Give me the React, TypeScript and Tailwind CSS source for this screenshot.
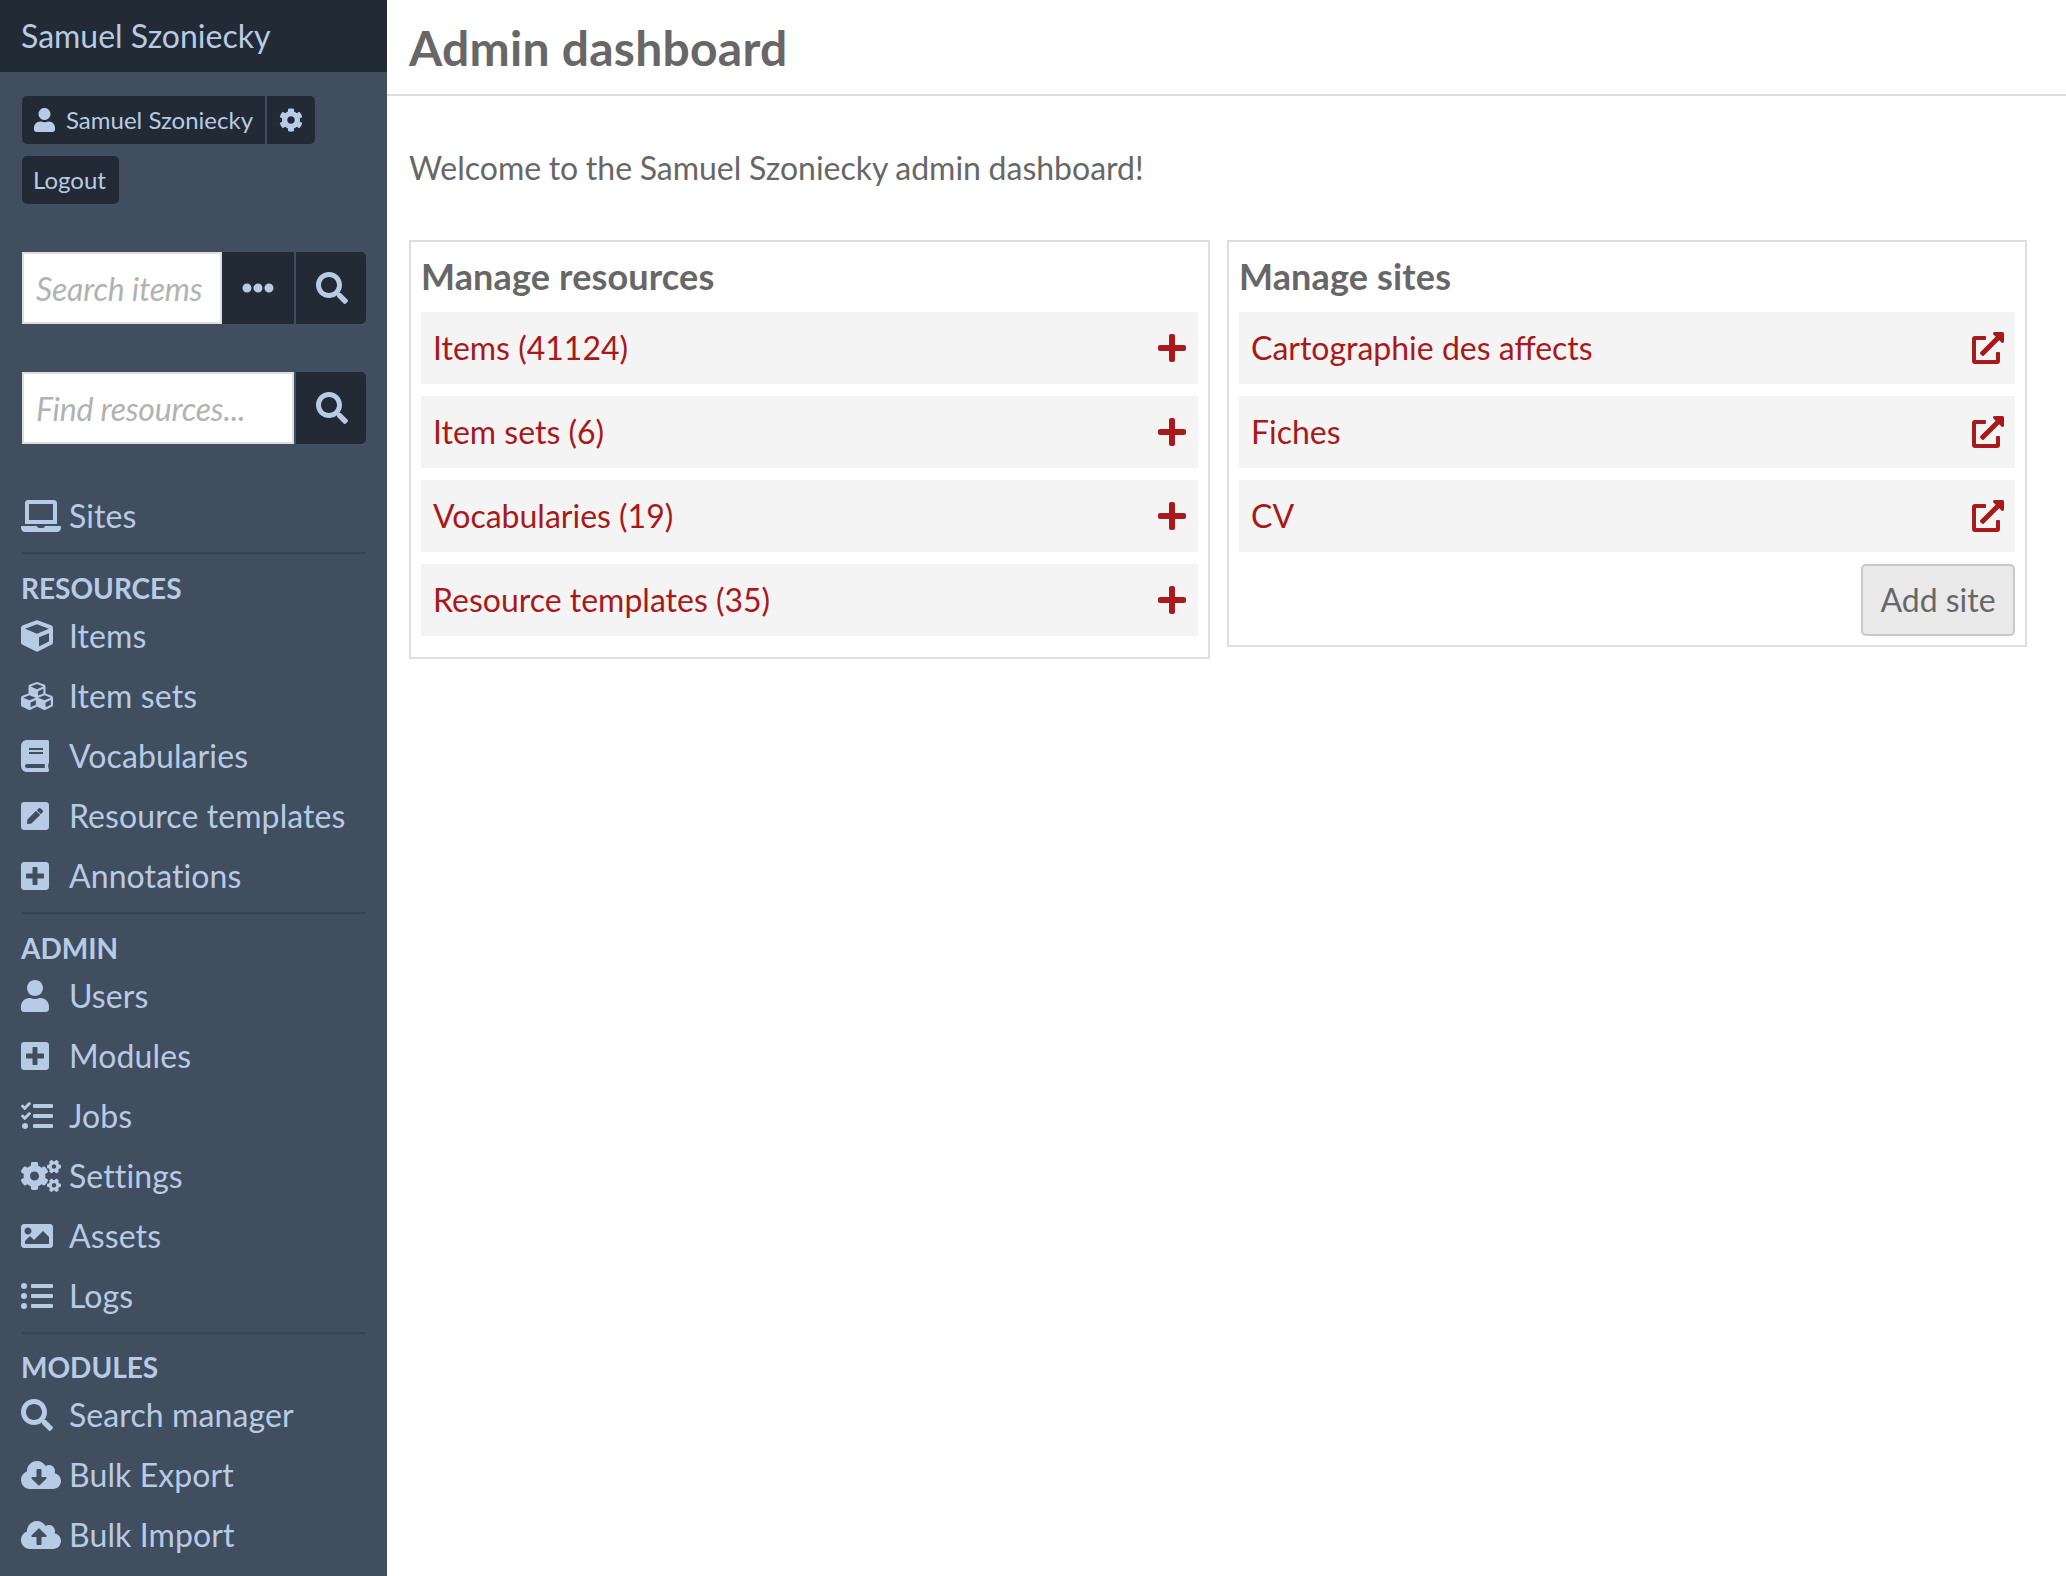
import React from "react";
import {
  FaUser, FaCog, FaEllipsisH, FaSearch, FaLaptop, FaCube, FaCubes, FaBook, FaPenSquare,
  FaPlusSquare, FaTasks, FaCogs, FaImage, FaListUl, FaCloudDownloadAlt, FaCloudUploadAlt,
  FaPlus, FaExternalLinkAlt,
} from "react-icons/fa";

type Item = { label: string; icon: React.ComponentType<{ className?: string }>; w: string };

function NavRow({ label, icon: Icon, w }: Item) {
  return (
    <a className="-ml-[1px] flex h-[60px] items-center tracking-[0.1px]">
      <span className="w-[48px] shrink-0">
        <Icon className={`block h-[32px] ${w}`} />
      </span>
      <span>{label}</span>
    </a>
  );
}

function Section({ title, items, labelH }: { title: string; items: Item[]; labelH: string }) {
  return (
    <div>
      <div className="mt-[6px] border-t-[2px] border-[#37434f]" />
      <div className={`-ml-[1px] flex ${labelH} items-end text-[28px] leading-[36px] font-bold uppercase`}>{title}</div>
      {items.map((i) => (
        <NavRow key={i.label} {...i} />
      ))}
    </div>
  );
}

function Panel({ title, rows, icon: Icon, iconW, width, rowPr, children }: { title: string; rows: string[]; icon: React.ComponentType<{ className?: string }>; iconW: string; width: string; rowPr: string; children?: React.ReactNode }) {
  return (
    <section className={`${width} border-[2px] border-[#dedede] px-[10px] pb-[9px]`}>
      <h2 className="flex h-[70px] items-center pb-[2px] text-[36px] font-bold tracking-[0.15px] text-[#676767]">{title}</h2>
      {rows.map((r) => (
        <div key={r} className={`mb-[12px] flex h-[72px] items-center justify-between bg-[#f4f4f4] ${rowPr} pl-[12px] text-[#a91919]`}>
          <span>{r}</span>
          <Icon className={`block h-[32px] ${iconW}`} />
        </div>
      ))}
      {children}
    </section>
  );
}

export default function App() {
  return (
    <div className="flex h-[1576px] overflow-hidden bg-white text-[32px] leading-[48px] font-['Lato',sans-serif]">
      <aside className="w-[387px] shrink-0 bg-[#414e60] text-[#b8cbe5]">
        <div className="flex h-[72px] items-center bg-[#212a35] pl-[21px]">Samuel Szoniecky</div>
        <div className="pr-[21px] pl-[22px]">
          <div className="mt-[24px] flex gap-[2px] text-[24px] leading-[48px]">
            <div className="flex h-[48px] w-[243px] items-center gap-[11px] rounded-l-[5px] bg-[#212a35] pl-[12px]">
              <FaUser className="h-[24px] w-[21px]" />
              <span>Samuel Szoniecky</span>
            </div>
            <div className="flex h-[48px] w-[48px] items-center justify-center rounded-r-[5px] bg-[#212a35]">
              <FaCog className="h-[24px] w-[24px]" />
            </div>
          </div>
          <div className="mt-[12px] flex h-[48px] w-[97px] items-center justify-center rounded-[5px] bg-[#212a35] pr-[2px] text-[24px]">Logout</div>

          <div className="mt-[48px] flex h-[72px]">
            <div className="flex h-full w-[200px] items-center border-[2px] border-[#dedede] bg-white pt-[2px] pl-[12px] tracking-[-0.2px] text-[#b2b2b2] italic">Search items</div>
            <div className="flex h-full w-[72px] items-center justify-center bg-[#212a35]"><FaEllipsisH className="h-[32px] w-[32px]" /></div>
            <div className="ml-[2px] flex h-full w-[70px] items-center justify-center rounded-r-[5px] bg-[#212a35] pl-[2px]"><FaSearch className="h-[32px] w-[32px]" /></div>
          </div>
          <div className="mt-[48px] flex h-[72px]">
            <div className="flex h-full w-[272px] items-center border-[2px] border-[#dedede] bg-white pt-[2px] pl-[12px] tracking-[-0.2px] text-[#b2b2b2] italic">Find resources...</div>
            <div className="ml-[2px] flex h-full w-[70px] items-center justify-center rounded-r-[5px] bg-[#212a35] pl-[2px]"><FaSearch className="h-[32px] w-[32px]" /></div>
          </div>

          <div className="mt-[42px]">
            <NavRow label="Sites" icon={FaLaptop} w="w-[40px]" />
          </div>
          <Section
            title="Resources"
            labelH="h-[52px]"
            items={[
              { label: "Items", icon: FaCube, w: "w-[32px]" },
              { label: "Item sets", icon: FaCubes, w: "w-[32px]" },
              { label: "Vocabularies", icon: FaBook, w: "w-[28px]" },
              { label: "Resource templates", icon: FaPenSquare, w: "w-[28px]" },
              { label: "Annotations", icon: FaPlusSquare, w: "w-[28px]" },
            ]}
          />
          <Section
            title="Admin"
            labelH="h-[52px]"
            items={[
              { label: "Users", icon: FaUser, w: "w-[28px]" },
              { label: "Modules", icon: FaPlusSquare, w: "w-[28px]" },
              { label: "Jobs", icon: FaTasks, w: "w-[32px]" },
              { label: "Settings", icon: FaCogs, w: "w-[40px]" },
              { label: "Assets", icon: FaImage, w: "w-[32px]" },
              { label: "Logs", icon: FaListUl, w: "w-[32px]" },
            ]}
          />
          <Section
            title="Modules"
            labelH="h-[51px]"
            items={[
              { label: "Search manager", icon: FaSearch, w: "w-[32px]" },
              { label: "Bulk Export", icon: FaCloudDownloadAlt, w: "w-[40px]" },
              { label: "Bulk Import", icon: FaCloudUploadAlt, w: "w-[40px]" },
            ]}
          />
        </div>
      </aside>
      <main className="min-w-0 flex-1 text-[#676767]">
        <header className="flex h-[96px] items-center border-b-[2px] border-[#dedede] pt-[2px] pl-[22px] text-[48px] font-bold tracking-[0.25px]">Admin dashboard</header>
        <div className="pr-[39px] pl-[22px]">
          <p className="mt-[48px] [word-spacing:-0.6px]">Welcome to the Samuel Szoniecky admin dashboard!</p>
          <div className="mt-[48px] flex items-start gap-[17px]">
            <Panel title="Manage resources" icon={FaPlus} iconW="w-[28px]" width="w-[801px]" rowPr="pr-[12px]" rows={["Items (41124)", "Item sets (6)", "Vocabularies (19)", "Resource templates (35)"]} />
            <Panel title="Manage sites" icon={FaExternalLinkAlt} iconW="w-[32px]" width="w-[800px]" rowPr="pr-[11px]" rows={["Cartographie des affects", "Fiches", "CV"]}>
              <div className="flex justify-end">
                <button className="h-[72px] w-[154px] rounded-[5px] border-[2px] border-[#c8c8c8] bg-[#eaeaea] text-[#676767]">Add site</button>
              </div>
            </Panel>
          </div>
        </div>
      </main>
    </div>
  );
}
